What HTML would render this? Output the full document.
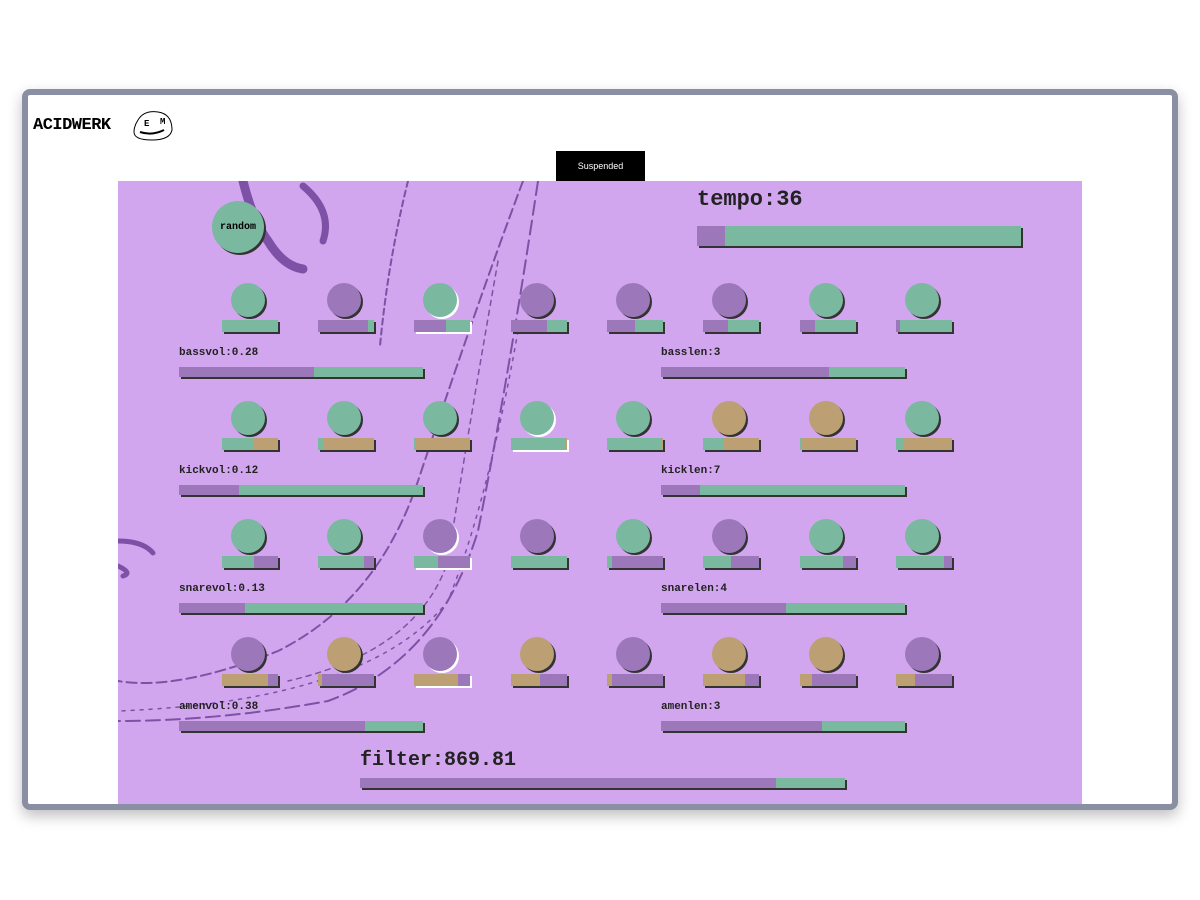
<!DOCTYPE html><html><head><style>
body{margin:0;width:1200px;height:900px;background:#fff;position:relative;overflow:hidden;font-family:"Liberation Mono",monospace}
.fr{position:absolute;left:22px;top:89px;width:1144px;height:709px;border:6px solid #8a8fa3;border-radius:8px;background:#fff;box-shadow:0 6px 14px rgba(0,0,0,.25)}
.p{position:absolute;left:118px;top:181px;width:964px;height:623px;background:#d1a6ee;overflow:hidden}
.c{position:absolute;width:34px;height:34px;border-radius:50%;box-shadow:2px 2px 0 #333}
.b{position:absolute;height:12px;box-shadow:2px 2px 0 #333;display:flex}
.l{position:absolute;height:10px;width:244px;box-shadow:2px 2px 0 #333;display:flex}
.t{position:absolute;font-size:11px;font-weight:bold;color:#222}
.g{background:#7ab8a0}.u{background:#9c78bb}.n{background:#bc9f72}
.w{box-shadow:2px 2px 0 #fff}
</style></head><body>
<div class="fr"></div>
<div style="position:absolute;left:33px;top:116px;font-size:17px;font-weight:bold;letter-spacing:-0.5px">ACIDWERK</div>
<svg style="position:absolute;left:130px;top:106px" width="44" height="38"><path d="M8 14 Q14 4 28 6 Q42 8 42 24 Q40 34 22 34 Q4 34 4 26 Q4 20 8 14Z" fill="#fff" stroke="#000" stroke-width="1"/><path d="M10 26 Q22 30 34 24" stroke="#000" stroke-width="2" fill="none"/><text x="14" y="20" font-size="9" font-weight="bold" font-family="Liberation Mono">E</text><text x="30" y="18" font-size="9" font-weight="bold" font-family="Liberation Mono">M</text></svg>
<div style="position:absolute;left:556px;top:151px;width:89px;height:30px;background:#000;color:#fff;font:9px 'Liberation Sans',sans-serif;display:flex;align-items:center;justify-content:center">Suspended</div>
<div class="p">
<svg style="position:absolute;left:0;top:0" width="964" height="623" fill="none" stroke="#7d52a6" stroke-linecap="round">
<path d="M125 0 Q135 40 150 60 Q165 85 185 88" stroke-width="9"/>
<path d="M185 5 Q215 30 205 60" stroke-width="7"/>
<path d="M0 360 Q25 360 35 372 M0 385 Q15 392 5 395" stroke-width="5"/>
<path d="M290 0 Q270 80 262 165" stroke-width="2" stroke-dasharray="6 4"/>
<path d="M405 0 Q360 120 300 300 Q260 420 160 470 Q60 510 0 500" stroke-width="2" stroke-dasharray="10 5"/>
<path d="M420 0 Q390 200 360 350 Q320 480 210 520 Q100 540 0 540" stroke-width="2" stroke-dasharray="14 6"/>
<path d="M380 80 Q350 250 330 380 Q300 470 170 500" stroke-width="1.5" stroke-dasharray="5 5"/>
<path d="M400 150 Q370 320 330 420 Q250 520 0 530" stroke-width="1.5" stroke-dasharray="3 6"/>
</svg>
<div class="c g" style="left:94px;top:20px;width:52px;height:52px;display:flex;align-items:center;justify-content:center;font-size:10px;font-weight:bold">random</div>
<div class="t" style="left:579px;top:6px;font-size:22px">tempo:36</div>
<div class="l" style="left:579px;top:45px;width:324px;height:20px"><i class="u" style="width:28px"></i><i class="g" style="flex:1"></i></div>
<div class="t" style="left:242px;top:568px;font-size:20px">filter:869.81</div>
<div class="l" style="left:242px;top:597px;width:485px"><i class="u" style="width:416px"></i><i class="g" style="flex:1"></i></div>
</div>
<!-- row1 -->
<div class="c g" style="left:231px;top:283px"></div><div class="c u" style="left:327px;top:283px"></div><div class="c g w" style="left:423px;top:283px"></div><div class="c u" style="left:520px;top:283px"></div><div class="c u" style="left:616px;top:283px"></div><div class="c u" style="left:712px;top:283px"></div><div class="c g" style="left:809px;top:283px"></div><div class="c g" style="left:905px;top:283px"></div>
<div class="b" style="left:222px;top:320px;width:56px"><i class="g" style="flex:1"></i></div>
<div class="b" style="left:318px;top:320px;width:56px"><i class="u" style="width:50px"></i><i class="g" style="flex:1"></i></div>
<div class="b w" style="left:414px;top:320px;width:56px"><i class="u" style="width:32px"></i><i class="g" style="flex:1"></i></div>
<div class="b" style="left:511px;top:320px;width:56px"><i class="u" style="width:36px"></i><i class="g" style="flex:1"></i></div>
<div class="b" style="left:607px;top:320px;width:56px"><i class="u" style="width:28px"></i><i class="g" style="flex:1"></i></div>
<div class="b" style="left:703px;top:320px;width:56px"><i class="u" style="width:25px"></i><i class="g" style="flex:1"></i></div>
<div class="b" style="left:800px;top:320px;width:56px"><i class="u" style="width:15px"></i><i class="g" style="flex:1"></i></div>
<div class="b" style="left:896px;top:320px;width:56px"><i class="u" style="width:4px"></i><i class="g" style="flex:1"></i></div>
<div class="t" style="left:179px;top:347px">bassvol:0.28</div><div class="l" style="left:179px;top:367px"><i class="u" style="width:135px"></i><i class="g" style="flex:1"></i></div>
<div class="t" style="left:661px;top:347px">basslen:3</div><div class="l" style="left:661px;top:367px"><i class="u" style="width:168px"></i><i class="g" style="flex:1"></i></div>
<!-- row2 -->
<div class="c g" style="left:231px;top:401px"></div><div class="c g" style="left:327px;top:401px"></div><div class="c g" style="left:423px;top:401px"></div><div class="c g w" style="left:520px;top:401px"></div><div class="c g" style="left:616px;top:401px"></div><div class="c n" style="left:712px;top:401px"></div><div class="c n" style="left:809px;top:401px"></div><div class="c g" style="left:905px;top:401px"></div>
<div class="b" style="left:222px;top:438px;width:56px"><i class="g" style="width:31px"></i><i class="n" style="flex:1"></i></div>
<div class="b" style="left:318px;top:438px;width:56px"><i class="g" style="width:6px"></i><i class="n" style="flex:1"></i></div>
<div class="b" style="left:414px;top:438px;width:56px"><i class="g" style="width:2px"></i><i class="n" style="flex:1"></i></div>
<div class="b w" style="left:511px;top:438px;width:56px"><i class="g" style="width:54px"></i><i class="n" style="flex:1"></i></div>
<div class="b" style="left:607px;top:438px;width:56px"><i class="g" style="width:54px"></i><i class="n" style="flex:1"></i></div>
<div class="b" style="left:703px;top:438px;width:56px"><i class="g" style="width:21px"></i><i class="n" style="flex:1"></i></div>
<div class="b" style="left:800px;top:438px;width:56px"><i class="g" style="width:2px"></i><i class="n" style="flex:1"></i></div>
<div class="b" style="left:896px;top:438px;width:56px"><i class="g" style="width:8px"></i><i class="n" style="flex:1"></i></div>
<div class="t" style="left:179px;top:465px">kickvol:0.12</div><div class="l" style="left:179px;top:485px"><i class="u" style="width:60px"></i><i class="g" style="flex:1"></i></div>
<div class="t" style="left:661px;top:465px">kicklen:7</div><div class="l" style="left:661px;top:485px"><i class="u" style="width:39px"></i><i class="g" style="flex:1"></i></div>
<!-- row3 -->
<div class="c g" style="left:231px;top:519px"></div><div class="c g" style="left:327px;top:519px"></div><div class="c u w" style="left:423px;top:519px"></div><div class="c u" style="left:520px;top:519px"></div><div class="c g" style="left:616px;top:519px"></div><div class="c u" style="left:712px;top:519px"></div><div class="c g" style="left:809px;top:519px"></div><div class="c g" style="left:905px;top:519px"></div>
<div class="b" style="left:222px;top:556px;width:56px"><i class="g" style="width:32px"></i><i class="u" style="flex:1"></i></div>
<div class="b" style="left:318px;top:556px;width:56px"><i class="g" style="width:46px"></i><i class="u" style="flex:1"></i></div>
<div class="b w" style="left:414px;top:556px;width:56px"><i class="g" style="width:24px"></i><i class="u" style="flex:1"></i></div>
<div class="b" style="left:511px;top:556px;width:56px"><i class="g" style="flex:1"></i></div>
<div class="b" style="left:607px;top:556px;width:56px"><i class="g" style="width:5px"></i><i class="u" style="flex:1"></i></div>
<div class="b" style="left:703px;top:556px;width:56px"><i class="g" style="width:28px"></i><i class="u" style="flex:1"></i></div>
<div class="b" style="left:800px;top:556px;width:56px"><i class="g" style="width:43px"></i><i class="u" style="flex:1"></i></div>
<div class="b" style="left:896px;top:556px;width:56px"><i class="g" style="width:48px"></i><i class="u" style="flex:1"></i></div>
<div class="t" style="left:179px;top:583px">snarevol:0.13</div><div class="l" style="left:179px;top:603px"><i class="u" style="width:66px"></i><i class="g" style="flex:1"></i></div>
<div class="t" style="left:661px;top:583px">snarelen:4</div><div class="l" style="left:661px;top:603px"><i class="u" style="width:125px"></i><i class="g" style="flex:1"></i></div>
<!-- row4 -->
<div class="c u" style="left:231px;top:637px"></div><div class="c n" style="left:327px;top:637px"></div><div class="c u w" style="left:423px;top:637px"></div><div class="c n" style="left:520px;top:637px"></div><div class="c u" style="left:616px;top:637px"></div><div class="c n" style="left:712px;top:637px"></div><div class="c n" style="left:809px;top:637px"></div><div class="c u" style="left:905px;top:637px"></div>
<div class="b" style="left:222px;top:674px;width:56px"><i class="n" style="width:46px"></i><i class="u" style="flex:1"></i></div>
<div class="b" style="left:318px;top:674px;width:56px"><i class="n" style="width:4px"></i><i class="u" style="flex:1"></i></div>
<div class="b w" style="left:414px;top:674px;width:56px"><i class="n" style="width:44px"></i><i class="u" style="flex:1"></i></div>
<div class="b" style="left:511px;top:674px;width:56px"><i class="n" style="width:29px"></i><i class="u" style="flex:1"></i></div>
<div class="b" style="left:607px;top:674px;width:56px"><i class="n" style="width:5px"></i><i class="u" style="flex:1"></i></div>
<div class="b" style="left:703px;top:674px;width:56px"><i class="n" style="width:42px"></i><i class="u" style="flex:1"></i></div>
<div class="b" style="left:800px;top:674px;width:56px"><i class="n" style="width:12px"></i><i class="u" style="flex:1"></i></div>
<div class="b" style="left:896px;top:674px;width:56px"><i class="n" style="width:19px"></i><i class="u" style="flex:1"></i></div>
<div class="t" style="left:179px;top:701px">amenvol:0.38</div><div class="l" style="left:179px;top:721px"><i class="u" style="width:186px"></i><i class="g" style="flex:1"></i></div>
<div class="t" style="left:661px;top:701px">amenlen:3</div><div class="l" style="left:661px;top:721px"><i class="u" style="width:161px"></i><i class="g" style="flex:1"></i></div>
</body></html>
